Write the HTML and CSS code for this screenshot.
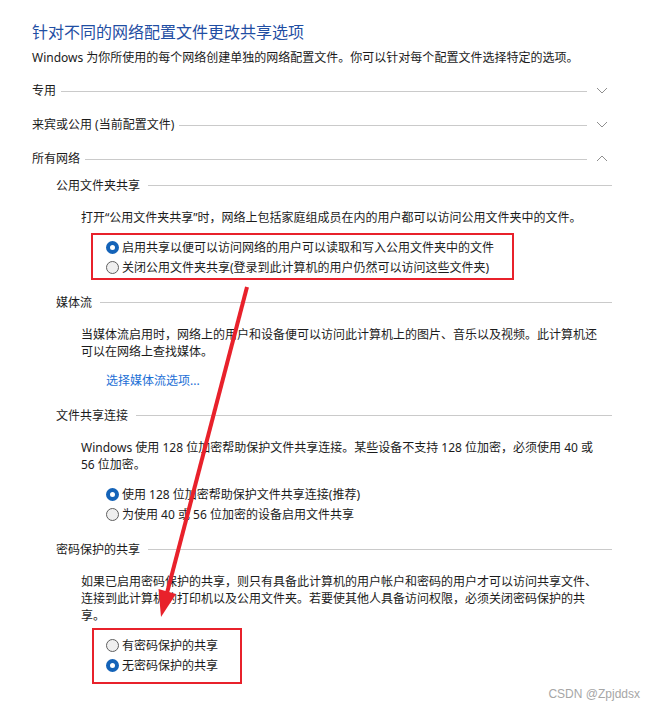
FILE: index.html
```html
<!DOCTYPE html>
<html lang="zh-CN">
<head>
<meta charset="UTF-8">
<meta name="viewport" content="width=device-width, initial-scale=1.0">
<title>高级共享设置</title>
<link rel="stylesheet" href="styles.css">
</head>
<body>
<div id="page">
    <h1>针对不同的网络配置文件更改共享选项</h1>
    <p class="intro">Windows 为你所使用的每个网络创建单独的网络配置文件。你可以针对每个配置文件选择特定的选项。</p>

    <div class="group">
        <span>专用</span>
        <span class="rule"></span>
        <svg class="chevron" width="20" height="10" viewBox="0 0 20 10"><polyline points="5,2 10,7 15,2"/></svg>
    </div>
    <div class="group">
        <span>来宾或公用 (当前配置文件)</span>
        <span class="rule"></span>
        <svg class="chevron" width="20" height="10" viewBox="0 0 20 10"><polyline points="5,2 10,7 15,2"/></svg>
    </div>
    <div class="group">
        <span>所有网络</span>
        <span class="rule"></span>
        <svg class="chevron" width="20" height="10" viewBox="0 0 20 10"><polyline points="5,7 10,2 15,7"/></svg>
    </div>

    <div class="section first">
        <div class="section-head"><span>公用文件夹共享</span><span class="rule"></span></div>
        <p class="desc">打开“公用文件夹共享”时，网络上包括家庭组成员在内的用户都可以访问公用文件夹中的文件。</p>
        <div class="options marked marked-top">
            <label class="option"><input type="radio" name="public" checked>启用共享以便可以访问网络的用户可以读取和写入公用文件夹中的文件</label>
            <label class="option"><input type="radio" name="public">关闭公用文件夹共享(登录到此计算机的用户仍然可以访问这些文件夹)</label>
        </div>
    </div>

    <div class="section">
        <div class="section-head"><span>媒体流</span><span class="rule"></span></div>
        <p class="desc">当媒体流启用时，网络上的用户和设备便可以访问此计算机上的图片、音乐以及视频。此计算机还可以在网络上查找媒体。</p>
        <div class="link-row"><a href="#">选择媒体流选项...</a></div>
    </div>

    <div class="section">
        <div class="section-head"><span>文件共享连接</span><span class="rule"></span></div>
        <p class="desc">Windows 使用 128 位加密帮助保护文件共享连接。某些设备不支持 128 位加密，必须使用 40 或 56 位加密。</p>
        <div class="options">
            <label class="option"><input type="radio" name="crypt" checked>使用 128 位加密帮助保护文件共享连接(推荐)</label>
            <label class="option"><input type="radio" name="crypt">为使用 40 或 56 位加密的设备启用文件共享</label>
        </div>
    </div>

    <div class="section">
        <div class="section-head"><span>密码保护的共享</span><span class="rule"></span></div>
        <p class="desc">如果已启用密码保护的共享，则只有具备此计算机的用户帐户和密码的用户才可以访问共享文件、连接到此计算机的打印机以及公用文件夹。若要使其他人具备访问权限，必须关闭密码保护的共享。</p>
        <div class="options marked marked-bottom">
            <label class="option"><input type="radio" name="password">有密码保护的共享</label>
            <label class="option"><input type="radio" name="password" checked>无密码保护的共享</label>
        </div>
    </div>
</div>

<svg class="arrow" width="656" height="711" viewBox="0 0 656 711">
    <line x1="247" y1="287" x2="167" y2="593"/>
    <polygon points="161,617 158.5,589 176,594"/>
</svg>
<div class="watermark">CSDN @Zpjddsx</div>
</body>
</html>
```

FILE: styles.css
```css
body {
    margin: 0;
    font-family: "Noto Sans", "Noto Sans CJK SC", sans-serif;
    font-size: 12px;
    color: #1b1b1b;
    background-color: #fff;
}
#page {
    width: 580px;
    padding: 21px 0 0 32px;
}
h1 {
    margin: 0;
    font-size: 16px;
    font-weight: normal;
    line-height: 22px;
    color: #1f4ea3;
}
.intro {
    margin: 6px 0;
    line-height: 18px;
}
.group {
    display: flex;
    align-items: center;
    height: 34px;
}
.rule {
    flex: 1;
    height: 1px;
    background-color: #cacaca;
}
.group .rule {
    margin: 2px 0 0 5px;
}
.chevron {
    margin: 2px 0 0 5px;
    fill: none;
    stroke: #8f8f8f;
    stroke-width: 1;
}
.section {
    margin: 16px 0 0 24px;
}
.section.first {
    margin-top: 1px;
}
.section-head {
    display: flex;
    align-items: center;
    height: 18px;
}
.section-head .rule {
    margin-left: 8px;
}
.desc {
    width: 522px;
    margin: 15px 0 0 25px;
    line-height: 17px;
}
.options {
    margin: 11px 0 0 50px;
}
.option {
    display: flex;
    align-items: center;
    height: 20px;
}
.option input {
    appearance: none;
    -webkit-appearance: none;
    box-sizing: border-box;
    width: 13px;
    height: 13px;
    margin: 0 3px 0 0;
    border: 1px solid #5f5f5f;
    border-radius: 50%;
    background-color: #efefef;
}
.option input:checked {
    border: 4px solid #1463b8;
    background-color: #fff;
}
.marked {
    box-sizing: border-box;
    border: 2px solid #e8212b;
}
.marked-top {
    width: 423px;
    margin: 7px 0 -3px 35px;
    padding: 2px 0 1px 13px;
}
.marked-bottom {
    width: 150px;
    margin: 4px 0 0 36px;
    padding: 5px 0 7px 12px;
}
.link-row {
    margin: 12px 0 0 50px;
    line-height: 18px;
}
.link-row a {
    color: #1c6fd6;
    text-decoration: none;
}
.arrow {
    position: absolute;
    top: 0;
    left: 0;
    pointer-events: none;
}
.arrow line {
    stroke: #e8212b;
    stroke-width: 4;
}
.arrow polygon {
    fill: #e8212b;
}
.watermark {
    position: absolute;
    top: 686px;
    right: 16px;
    font-family: "Liberation Sans", Arial, sans-serif;
    font-size: 12px;
    line-height: 16px;
    color: #a6a6a6;
}
```
